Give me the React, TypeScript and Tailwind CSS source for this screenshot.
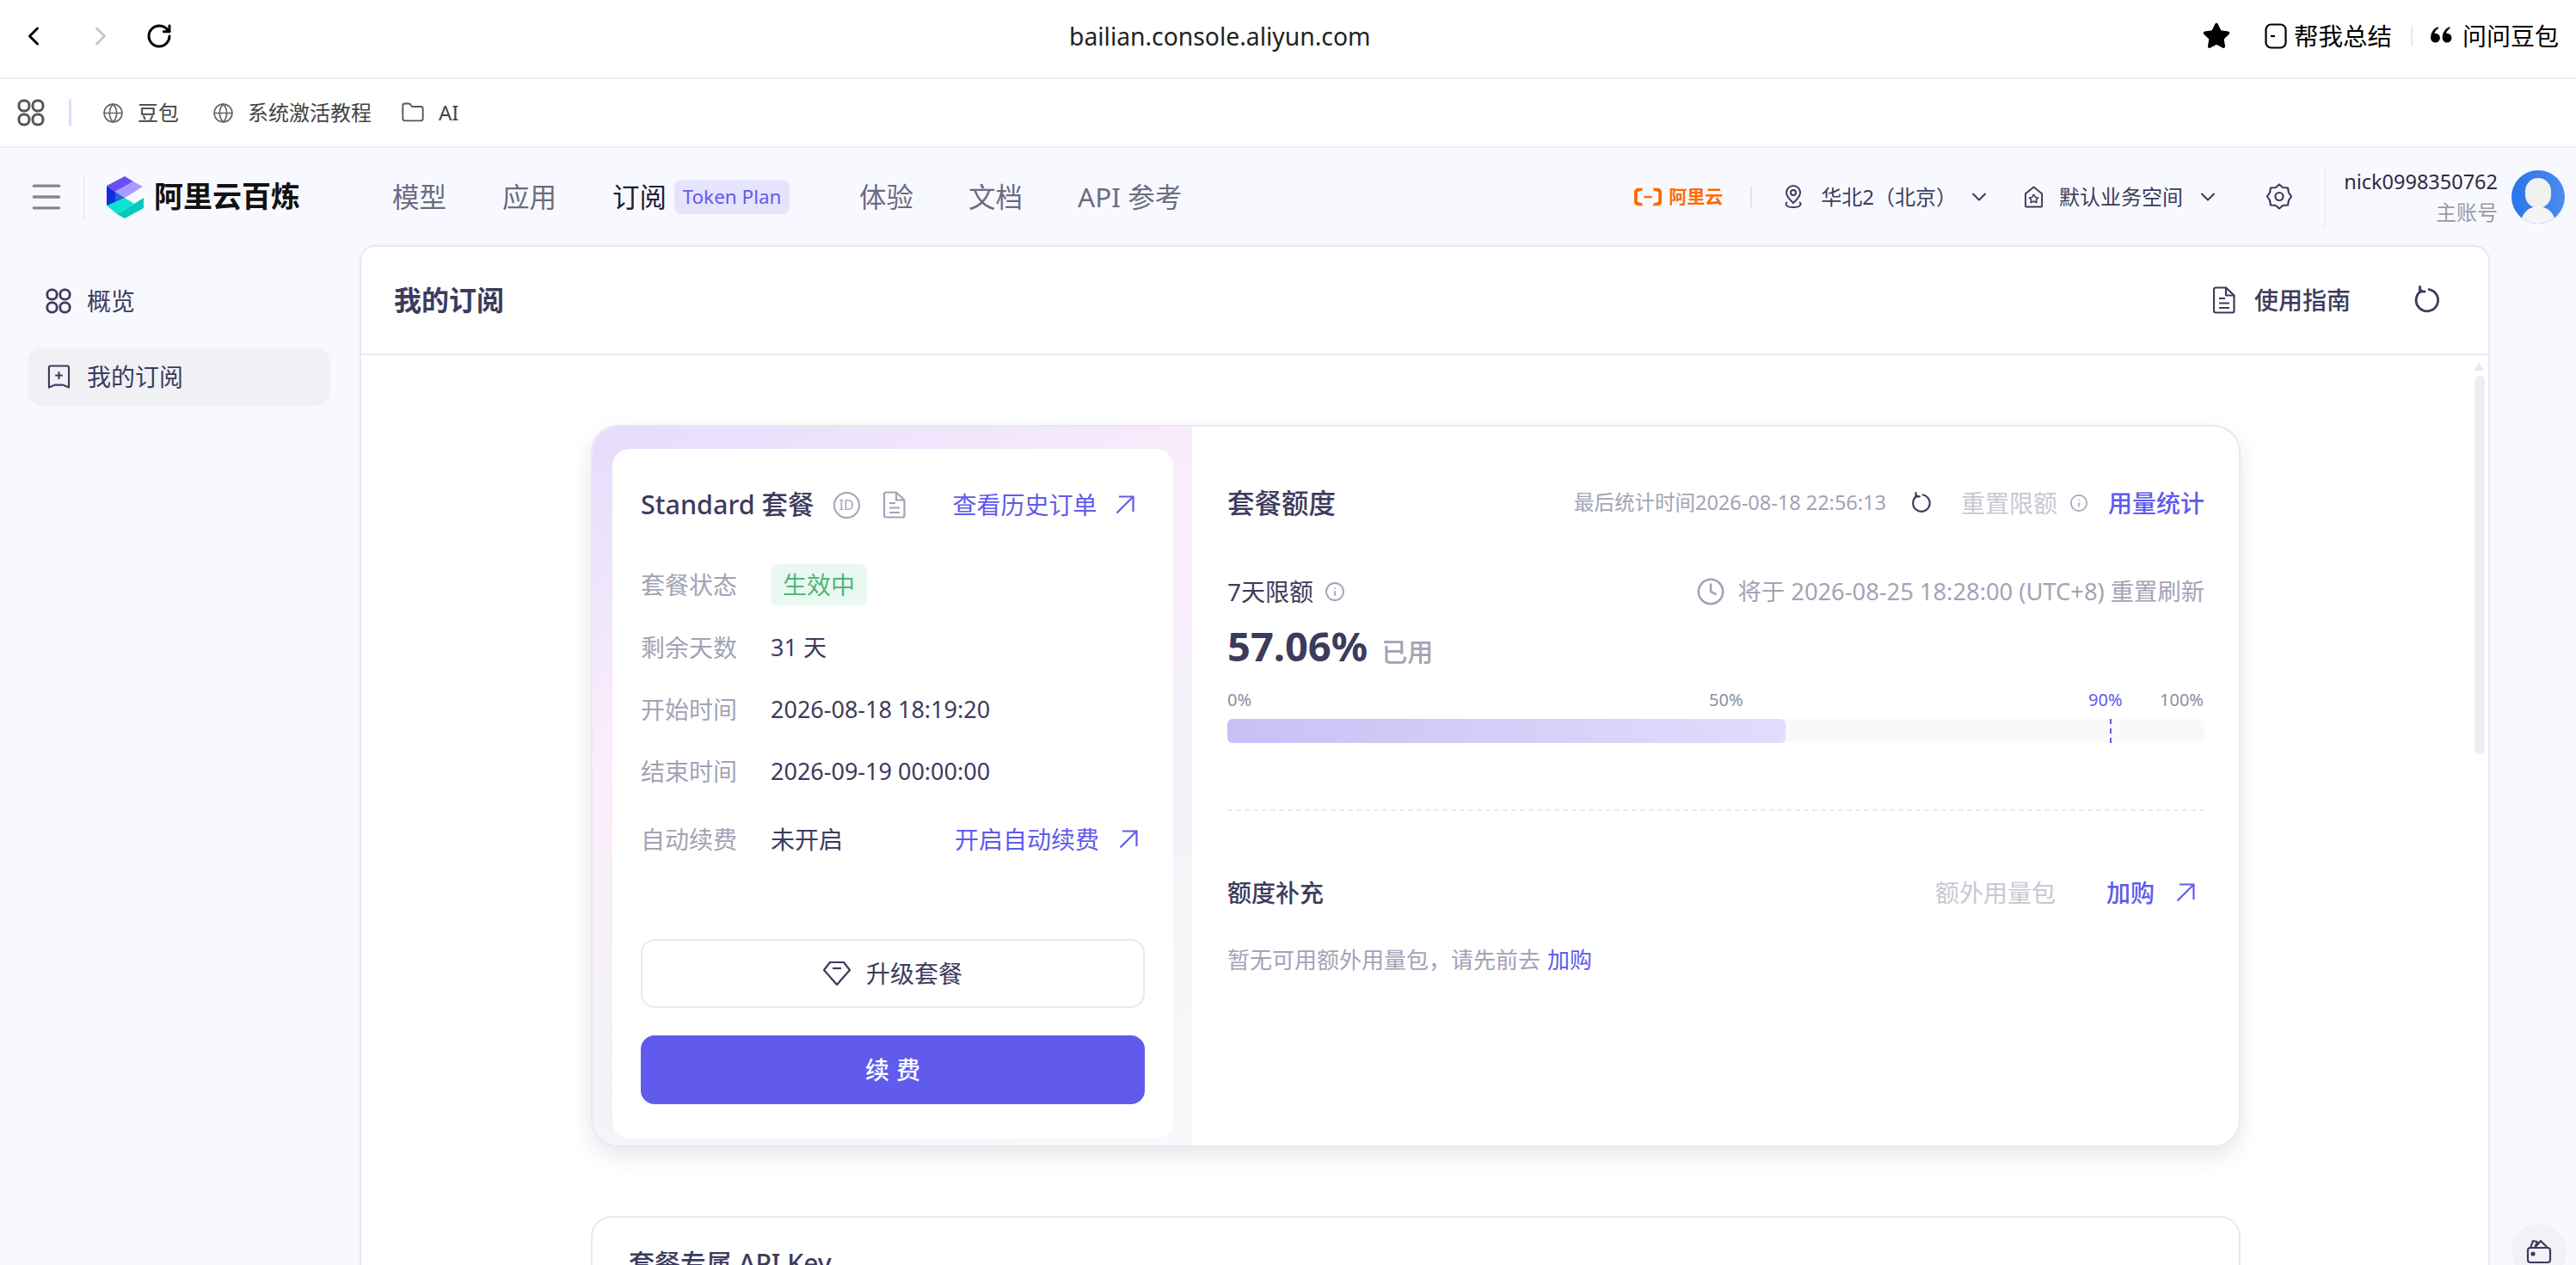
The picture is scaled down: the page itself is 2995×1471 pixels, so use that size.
import { ChevronDown, ChevronLeft, ChevronRight, Info, Clock, Globe, Folder, Star, Menu, RotateCw } from 'lucide-react';

const DARK = 'text-[#3d3b5d]';

function ReloadIcon({ className = '' }: { className?: string }) {
  return (
    <svg viewBox="0 0 24 24" fill="none" stroke="currentColor" strokeWidth="2" strokeLinecap="round" strokeLinejoin="round" className={className}>
      <path d="M13.500 3.200A9 9 0 1 1 7.500 4.200" />
      <path d="M7 1v4h4" transform="translate(-1 0)" />
    </svg>
  );
}

function ArrowIcon({ className = '' }: { className?: string }) {
  return (
    <svg viewBox="0 0 22 22" fill="none" stroke="currentColor" strokeWidth="2.200" className={`w-[22px] h-[22px] shrink-0 ${className}`}>
      <path d="M1.500 20.500L20 2M4 1.500h16.500V19" />
    </svg>
  );
}

function GridIcon({ className = '' }: { className?: string }) {
  return (
    <svg viewBox="0 0 32 32" fill="none" stroke="currentColor" strokeWidth="3" className={className}>
      <rect x="2" y="2" width="12" height="12" rx="5.500" />
      <rect x="18" y="2" width="12" height="12" rx="5.500" />
      <rect x="2" y="18" width="12" height="12" rx="5.500" />
      <rect x="18" y="18" width="12" height="12" rx="5.500" />
    </svg>
  );
}

function BookmarkPlus({ className = '' }: { className?: string }) {
  return (
    <svg viewBox="0 0 28 30" fill="none" stroke="currentColor" strokeWidth="2.200" strokeLinejoin="round" className={className}>
      <path d="M2 4a2 2 0 0 1 2-2h20a2 2 0 0 1 2 2v24l-7-3-5 0-5 0-7 3z" />
      <path d="M14 9v9M9.500 13.500h9" />
    </svg>
  );
}

function DocIcon({ className = '' }: { className?: string }) {
  return (
    <svg viewBox="0 0 26 32" fill="none" stroke="currentColor" strokeWidth="2.200" strokeLinejoin="round" className={className}>
      <path d="M3 1.500h12l9.500 9v18a2 2 0 0 1-2 2H3a2 2 0 0 1-2-2v-25a2 2 0 0 1 2-2z" />
      <path d="M15 1.500v9h9.500" />
      <path d="M7 14h7M7 19.500h12M7 25h12" />
    </svg>
  );
}

function Logo() {
  return (
    <svg viewBox="0 0 46 50" className="w-[46px] h-[50px]">
      <polygon points="1,12 22,1 32,7 11,19" fill="#6a4ff0" />
      <polygon points="11,19 32,7 43,13 22,26" fill="#a89bff" />
      <polygon points="1,12 11,19 11,34 1,35" fill="#0f2fd8" />
      <polygon points="11,19 22,26 11,33" fill="#2e5ce6" />
      <polygon points="1,35 22,26 33,33 13,45" fill="#0ce4cf" />
      <polygon points="13,45 33,33 44,26 44,38 22,50" fill="#05c8c0" />
    </svg>
  );
}

function AliyunMark() {
  return (
    <svg viewBox="0 0 34 22" className="w-[32px] h-[22px]" fill="#ff6a00">
      <path d="M0 5a5 5 0 0 1 5-5h6l-1.400 3.400-4 1a2 2 0 0 0-1.600 2v9.200a2 2 0 0 0 1.600 2l4 1L11 22H5a5 5 0 0 1-5-5zM34 5a5 5 0 0 0-5-5h-6l1.400 3.400 4 1a2 2 0 0 1 1.600 2v9.200a2 2 0 0 1-1.600 2l-4 1L23 22h6a5 5 0 0 0 5-5zM12 10h10v2.200H12z" />
    </svg>
  );
}

function NavLink({ children, active }: { children: React.ReactNode; active?: boolean }) {
  return <span className={`text-[31.500px] leading-[40px] ${active ? 'text-[#1f1d3d]' : 'text-[#6c6b82]'}`}>{children}</span>;
}

function PlanRow({ label, children }: { label: string; children: React.ReactNode }) {
  return (
    <div className="flex items-center h-[48px]">
      <span className="w-[151px] text-[28px] text-[#a3a3b5]">{label}</span>
      {children}
    </div>
  );
}

function BrowserBar() {
  return (
    <div className="h-[92px] shrink-0 pb-[6px] border-b-2 border-[#f0f0f0] bg-white flex items-center text-black">
      <ChevronLeft size={36} strokeWidth={2} className="ml-[21px]" />
      <ChevronRight size={36} strokeWidth={2} className="ml-[42px] text-[#c8c8c8]" />
      <RotateCw size={32} strokeWidth={2.200} className="ml-[34px]" />
      <span className="ml-[1042px] text-[28.300px] text-[#222]">bailian.console.aliyun.com</span>
      <div className="flex-1" />
      <Star size={34} fill="#000" strokeWidth={1.500} />
      <svg viewBox="0 0 26 30" fill="none" stroke="currentColor" strokeWidth="2.200" className="w-[26px] h-[30px] ml-[39px]">
        <rect x="1.500" y="1.500" width="23" height="27" rx="6" />
        <path d="M7 15h5" />
      </svg>
      <span className="ml-[8px] text-[28.500px]">帮我总结</span>
      <span className="ml-[22px] w-[2px] h-[22px] bg-[#e8e8e8]" />
      <svg viewBox="0 0 24 24" fill="currentColor" className="ml-[20px] w-[26px] h-[26px]">
        <path d="M8.500 2C4 4 1 8 1 14a5 5 0 1 0 5-5c-.3 0-.6 0-.9.1C5.600 6.800 7 5 9.500 3.500zM21 2c-4.500 2-7.500 6-7.500 12a5 5 0 1 0 5-5c-.3 0-.6 0-.9.1.5-2.300 1.900-4.100 4.400-5.600z" />
      </svg>
      <span className="ml-[12px] mr-[20px] text-[28px]">问问豆包</span>
    </div>
  );
}

function BookmarkBar() {
  return (
    <div className="h-[80px] shrink-0 border-b-2 border-[#f0f0f0] bg-white flex items-center text-[24px] text-[#444]">
      <GridIcon className="w-[32px] h-[32px] ml-[20px] text-[#555]" />
      <span className="ml-[28px] w-[3px] h-[32px] rounded bg-[#d5e2f5]" />
      <Globe size={25} strokeWidth={1.600} className="ml-[36px] text-[#666]" />
      <span className="ml-[16px]">豆包</span>
      <Globe size={25} strokeWidth={1.600} className="ml-[39px] text-[#666]" />
      <span className="ml-[16px]">系统激活教程</span>
      <Folder size={28} strokeWidth={1.600} className="ml-[34px] text-[#555]" />
      <span className="ml-[16px]">AI</span>
    </div>
  );
}

function ConsoleHeader() {
  return (
    <div className="h-[113px] shrink-0 flex items-center">
      <Menu size={44} strokeWidth={1.800} className="ml-[32px] text-[#85858f]" />
      <span className="ml-[21px] w-[2px] h-[52px] bg-[#eceef3]" />
      <span className="ml-[24px]"><Logo /></span>
      <span className="ml-[10px] text-[34px] font-bold text-[#111]">阿里云百炼</span>
      <div className="ml-[107px] flex items-center">
        <NavLink>模型</NavLink>
        <span className="ml-[65px]"><NavLink>应用</NavLink></span>
        <span className="ml-[65px]"><NavLink active>订阅</NavLink></span>
        <span className="ml-[9px] w-[134px] h-[40px] rounded-[8px] bg-[#e6e3fd] text-[#605bec] text-[22.500px] flex items-center justify-center">Token Plan</span>
        <span className="ml-[81px]"><NavLink>体验</NavLink></span>
        <span className="ml-[64px]"><NavLink>文档</NavLink></span>
        <span className="ml-[64px]"><NavLink>API 参考</NavLink></span>
      </div>
      <div className="flex-1" />
      <AliyunMark />
      <span className="ml-[8px] text-[21px] font-bold text-[#ff6a00]">阿里云</span>
      <span className="ml-[32px] w-[2px] h-[24px] bg-[#e2e3ea]" />
      <svg viewBox="0 0 24 28" fill="none" stroke="#3d3b5d" strokeWidth="2" className="ml-[36px] w-[24px] h-[28px]">
        <path d="M12 21c-4-4-8-7-8-12a8 8 0 0 1 16 0c0 5-4 8-8 12z" />
        <circle cx="12" cy="9" r="3" />
        <path d="M5 20c-3 2-2 6 7 6s10-4 7-6" />
      </svg>
      <span className={`ml-[20px] text-[24px] ${DARK}`}>华北2（北京）</span>
      <ChevronDown size={28} strokeWidth={1.800} className={`ml-[12px] ${DARK}`} />
      <svg viewBox="0 0 24 28" fill="none" stroke="#3d3b5d" strokeWidth="2" strokeLinejoin="round" className="ml-[38px] w-[23px] h-[28px]">
        <path d="M12 2l10 8v15a1 1 0 0 1-1 1H3a1 1 0 0 1-1-1V10z" />
        <path d="M12 11l2 3.500 3.500.5-2.500 2.500.6 3.500-3.600-1.800-3.600 1.800.6-3.500L6.500 15l3.500-.5z" strokeWidth="1.600" />
      </svg>
      <span className={`ml-[18px] text-[24px] ${DARK}`}>默认业务空间</span>
      <ChevronDown size={28} strokeWidth={1.800} className={`ml-[15px] ${DARK}`} />
      <svg viewBox="0 0 30 32" fill="none" stroke="#3d3b5d" strokeWidth="2.200" strokeLinejoin="round" className="ml-[54px] w-[30px] h-[32px]">
        <path d="M15 1.500l4 3.500 6 .5 1 5.500 3 4.500-3 4.500-1 5.500-6 .5-4 3.500-4-3.500-6-.5-1-5.500-3-4.500 3-4.500 1-5.500 6-.5z" />
        <circle cx="15" cy="15.500" r="4.500" />
      </svg>
      <span className="ml-[37px] w-[2px] h-[72px] bg-[#eceef3]" />
      <div className="ml-[18px] w-[182px] flex flex-col items-end">
        <span className="text-[23.500px] leading-[36px] text-[#2d2b45]">nick0998350762</span>
        <span className="text-[24px] leading-[36px] text-[#9a9aa5]">主账号</span>
      </div>
      <div className="ml-[16px] mr-[13px] w-[62px] h-[62px] rounded-full overflow-hidden relative bg-[linear-gradient(90deg,#2a74ea,#4d8bf0)]">
        <div className="absolute left-[16px] top-[9px] w-[30px] h-[35px] rounded-full bg-[#f1f1f1]" />
        <div className="absolute left-[11px] top-[42px] w-[40px] h-[30px] rounded-t-full bg-[#f4f4f4]" />
      </div>
    </div>
  );
}

function Sidebar() {
  return (
    <div className="w-[418px] shrink-0 pl-[32px] pr-[34px] pt-[37px] text-[28px]">
      <div className={`h-[56px] flex items-center pl-[21px] ${DARK}`}>
        <GridIcon className="w-[30px] h-[30px]" />
        <span className="ml-[18px]">概览</span>
      </div>
      <div className={`mt-[26px] h-[68px] rounded-[18px] bg-[#f0f1f5] flex items-center pl-[23px] ${DARK}`}>
        <BookmarkPlus className="w-[27px] h-[30px]" />
        <span className="ml-[19px]">我的订阅</span>
      </div>
    </div>
  );
}

function PlanCard() {
  return (
    <div className="w-[1918px] h-[840px] flex rounded-[32px] border-2 border-[#e8e8ef] shadow-[0_10px_24px_rgba(60,60,100,0.12)] overflow-hidden">
      <div className="w-[697px] shrink-0 pl-[23px] pr-[22px] pt-[26px] pb-[8px] bg-[linear-gradient(155deg,#e6dcfc_0%,#fbeefb_35%,#f3f2f8_65%,#f9f9fb_100%)]">
        <div className="h-full rounded-[20px] bg-white px-[33px] pt-[45px]">
          <div className={`h-[40px] flex items-center ${DARK}`}>
            <span className="text-[30.500px] font-medium whitespace-nowrap">Standard 套餐</span>
            <span className="ml-[22px] w-[31px] h-[31px] shrink-0 rounded-full border-2 border-[#a3a3b5] text-[#a3a3b5] text-[16px] flex items-center justify-center">ID</span>
            <DocIcon className="ml-[27px] w-[26px] h-[32px] text-[#a3a3b5]" />
            <span className="ml-[55px] text-[28px] text-[#605bec] whitespace-nowrap">查看历史订单</span>
            <ArrowIcon className="ml-[21px] text-[#605bec]" />
          </div>
          <div className="mt-[49px]">
            <PlanRow label="套餐状态">
              <span className="w-[112px] h-[48px] rounded-[8px] bg-[#e9f8f0] text-[#4eb57c] text-[28px] flex items-center justify-center">生效中</span>
            </PlanRow>
          </div>
          <div className={`mt-[25px] flex flex-col gap-[24px] text-[27px] ${DARK}`}>
            <PlanRow label="剩余天数"><span>31 天</span></PlanRow>
            <PlanRow label="开始时间"><span>2026-08-18 18:19:20</span></PlanRow>
            <PlanRow label="结束时间"><span>2026-09-19 00:00:00</span></PlanRow>
          </div>
          <div className={`mt-[31px] text-[28px] ${DARK}`}>
            <PlanRow label="自动续费">
              <span>未开启</span>
              <span className="ml-[130px] text-[#605bec] whitespace-nowrap">开启自动续费</span>
              <ArrowIcon className="ml-[23px] text-[#605bec]" />
            </PlanRow>
          </div>
          <button className={`mt-[92px] w-full h-[80px] rounded-[16px] border-2 border-[#e8e8ef] bg-white flex items-center justify-center text-[28px] ${DARK}`}>
            <svg viewBox="0 0 32 30" fill="none" stroke="currentColor" strokeWidth="2.200" strokeLinejoin="round" className="w-[32px] h-[30px]">
              <path d="M8 2h16l7 9-15 17L1 11z" />
              <path d="M11 9h10" />
            </svg>
            <span className="ml-[18px]">升级套餐</span>
          </button>
          <button className="mt-[32px] w-full h-[80px] pl-[8px] rounded-[16px] bg-[#605bec] text-white text-[28px] font-medium tracking-[8px] flex items-center justify-center">续费</button>
        </div>
      </div>
      <div className={`flex-1 pl-[41px] pr-[40px] pt-[69px] ${DARK}`}>
        <div className="h-[40px] flex items-center">
          <span className="text-[31.500px] font-medium">套餐额度</span>
          <div className="flex-1" />
          <span className="text-[23.500px] text-[#a3a3b5] whitespace-nowrap">最后统计时间2026-08-18 22:56:13</span>
          <ReloadIcon className="ml-[28px] w-[26px] h-[26px]" />
          <span className="ml-[33px] text-[28px] text-[#c8c8d2]">重置限额</span>
          <Info size={22} strokeWidth={1.800} className="ml-[14px] text-[#a3a3b5]" />
          <span className="ml-[23px] text-[28px] font-medium text-[#605bec]">用量统计</span>
        </div>
        <div className="mt-[63px] h-[40px] flex items-center">
          <span className="text-[28px]">7天限额</span>
          <Info size={24} strokeWidth={1.800} className="ml-[13px] text-[#a3a3b5]" />
          <div className="flex-1" />
          <Clock size={34} strokeWidth={1.800} className="text-[#a3a3b5]" />
          <span className="ml-[15px] text-[27.300px] text-[#a3a3b5] whitespace-nowrap">将于 2026-08-25 18:28:00 (UTC+8) 重置刷新</span>
        </div>
        <div className="mt-[13px] h-[60px] flex items-baseline">
          <span className="text-[47px] font-bold leading-[60px]">57.06%</span>
          <span className="ml-[16px] text-[30px] font-medium text-[#a3a3b5]">已用</span>
        </div>
        <div className="mt-[20px] h-[26px] flex items-center text-[20px] text-[#8e8ea0]">
          <span className="w-[560px]">0%</span>
          <span className="w-[441px]">50%</span>
          <span className="w-[83px] text-[#605bec]">90%</span>
          <span>100%</span>
        </div>
        <div className="mt-[9px] h-[28px] rounded-[6px] bg-[#f9f9f9] relative">
          <div className="w-[649px] h-full rounded-[6px] bg-[linear-gradient(90deg,#c8c0f4,#e1ddfd)]" />
          <div className="absolute left-[1026px] top-0 w-[2px] h-full bg-[repeating-linear-gradient(to_bottom,#605bec_0,#605bec_6px,transparent_6px,transparent_11px)]" />
        </div>
        <div className="mt-[77px] border-t-2 border-dashed border-[#e8e8ef]" />
        <div className="mt-[75px] h-[40px] flex items-center">
          <span className="text-[28px] font-medium">额度补充</span>
          <div className="flex-1" />
          <span className="text-[28px] text-[#c8c8d2]">额外用量包</span>
          <span className="ml-[59px] text-[28px] font-medium text-[#605bec]">加购</span>
          <ArrowIcon className="ml-[25px] mr-[11px] text-[#605bec]" />
        </div>
        <div className="mt-[38px] h-[40px] flex items-center text-[26px] text-[#a3a3b5]">
          <span>暂无可用额外用量包，请先前去</span>
          <span className="ml-[8px] text-[#605bec]">加购</span>
        </div>
      </div>
    </div>
  );
}

function MainPanel() {
  return (
    <div className="w-[2477px] shrink-0 h-full overflow-hidden border-x-2 border-t-2 border-[#e8e8ef] rounded-t-[18px] bg-white flex flex-col">
      <div className="h-[126px] shrink-0 border-b-2 border-[#e8e8ef] flex items-center pl-[38px] pr-[40px]">
        <span className={`text-[32px] font-bold ${DARK}`}>我的订阅</span>
        <div className="flex-1" />
        <DocIcon className={`w-[26px] h-[32px] ${DARK}`} />
        <span className={`ml-[22px] text-[28px] font-medium ${DARK}`}>使用指南</span>
        <ReloadIcon className={`ml-[72px] mr-[14px] w-[34px] h-[34px] ${DARK}`} />
      </div>
      <div className="relative flex-1 pt-[81px] pl-[267px]">
        <PlanCard />
        <div className="mt-[80px] w-[1918px] h-[200px] rounded-t-[24px] border-2 border-[#e8e8ef] pl-[42px] pt-[30px]">
          <span className={`text-[30px] font-medium ${DARK}`}>套餐专属 API Key</span>
        </div>
        <div className="absolute right-[5px] top-[8px] w-0 h-0 border-x-[6px] border-x-transparent border-b-[10px] border-b-[#e8e8ee]" />
        <div className="absolute right-[4px] top-[24px] w-[12px] h-[440px] rounded-full bg-[#eeeef2]" />
      </div>
    </div>
  );
}

export default function App() {
  return (
    <div className="relative w-[2995px] h-[1471px] overflow-hidden bg-[#f8f9fe] flex flex-col font-['Noto_Sans','Noto_Sans_CJK_SC',sans-serif]">
      <BrowserBar />
      <BookmarkBar />
      <ConsoleHeader />
      <div className="flex flex-1 min-h-0">
        <Sidebar />
        <MainPanel />
      </div>
      <div className="absolute left-[2920px] top-[1423px] w-[64px] h-[64px] rounded-full bg-[#f1f2f6] flex items-center justify-center">
        <svg viewBox="0 0 30 30" fill="none" stroke="#3d3b5d" strokeWidth="2.200" strokeLinejoin="round" className="w-[30px] h-[30px]">
          <rect x="2" y="11" width="26" height="17" rx="3" />
          <path d="M5 11l3-8 5 1-3 7M10 11l7-8 8 8" />
          <circle cx="8" cy="18" r="1.500" fill="#3d3b5d" />
        </svg>
      </div>
    </div>
  );
}
